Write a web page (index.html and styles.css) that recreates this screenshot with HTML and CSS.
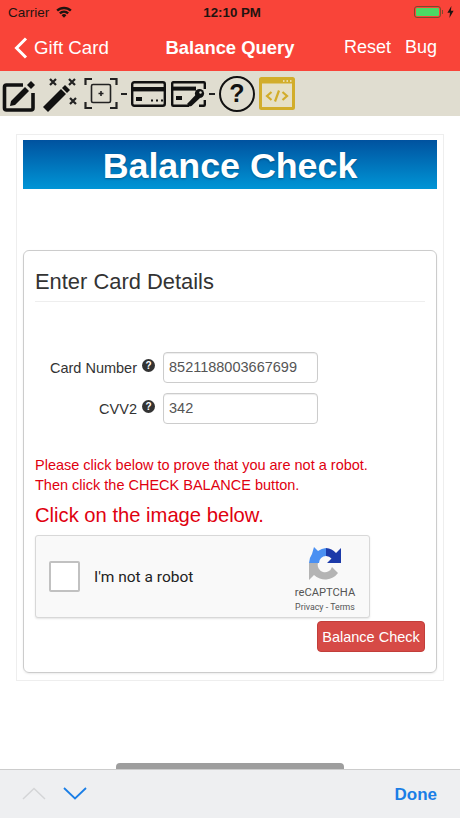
FILE: index.html
```html
<!DOCTYPE html>
<html lang="en">
<head>
    <meta charset="UTF-8">
    <title>Balance Query</title>
    <link rel="stylesheet" href="styles.css">
</head>
<body>
    <div class="app">
        <header class="top">
            <div class="status">
                <div class="status-left">
                    <span>Carrier</span>
                    <svg class="wifi" width="16" height="12" viewBox="0 0 16 12">
                        <path d="M0.3 3.8 A11 11 0 0 1 15.7 3.8 L14 5.6 A8.6 8.6 0 0 0 2 5.6 Z" fill="#1f1410"/>
                        <path d="M3 6.6 A7.2 7.2 0 0 1 13 6.6 L11.3 8.3 A4.8 4.8 0 0 0 4.7 8.3 Z" fill="#1f1410"/>
                        <path d="M5.6 9.2 A3.4 3.4 0 0 1 10.4 9.2 L8 11.7 Z" fill="#1f1410"/>
                    </svg>
                </div>
                <div class="status-time">12:10 PM</div>
                <div class="status-right">
                    <div class="battery"><div class="battery-fill"></div></div>
                    <div class="battery-cap"></div>
                    <svg width="7" height="12" viewBox="0 0 7 12"><path d="M4.4 0 L0.4 6.8 H3 L2.4 12 L6.6 4.8 H3.9 Z" fill="#1f1410"/></svg>
                </div>
            </div>
            <nav class="nav">
                <div class="nav-back">
                    <svg width="14" height="22" viewBox="0 0 14 22"><path d="M12 1.5 L2.5 11 L12 20.5" fill="none" stroke="#fff" stroke-width="3"/></svg>
                    <span>Gift Card</span>
                </div>
                <div class="nav-title">Balance Query</div>
                <div class="nav-actions"><span>Reset</span><span>Bug</span></div>
            </nav>
        </header>

        <div class="tools">
            <svg width="34" height="36" viewBox="0 0 34 36">
                <path d="M21 9 H4.5 A2 2 0 0 0 2.5 11 V32 A2 2 0 0 0 4.5 34 H29 A2 2 0 0 0 31 32 V17" fill="none" stroke="#111" stroke-width="3.6"/>
                <path d="M9 25 L23 11 L27 15 L13 29 L8 30 Z M25 9 L29 5 L33 9 L29 13 Z" fill="#111"/>
            </svg>
            <svg class="wand" width="36" height="36" viewBox="0 0 36 36">
                <path d="M0 31 L18 13 L23 18 L5 36 Z" fill="#111"/>
                <path d="M19 12 L22 9 L27 14 L24 17 Z" fill="#111"/>
                <path d="M7 3 L13 9 M13 3 L7 9 M26 3 L32 9 M32 3 L26 9 M27 22 L33 28 M33 22 L27 28" stroke="#222" stroke-width="2.2"/>
            </svg>
            <svg class="frame-icon" width="34" height="33" viewBox="0 0 34 33">
                <path d="M1.5 8 V2 H8 M26 2 H32.5 V8 M32.5 25 V31 H26 M8 31 H1.5 V25" fill="none" stroke="#222" stroke-width="2.2"/>
                <rect x="7.5" y="7.5" width="19" height="18" rx="1.5" fill="none" stroke="#222" stroke-width="1.6"/>
                <path d="M14.5 16.5 H19.5 M17 14 V19" stroke="#222" stroke-width="1.6"/>
            </svg>
            <span class="tool-dash"></span>
            <svg width="35" height="26" viewBox="0 0 35 26">
                <rect x="1.2" y="1.2" width="32.6" height="23.6" rx="2" fill="none" stroke="#111" stroke-width="2.4"/>
                <rect x="1" y="6" width="33" height="4.4" fill="#111"/>
                <rect x="5" y="16" width="6" height="4" fill="#111"/>
                <path d="M20 19.5 H22 M25 19.5 H27 M30 19.5 H32" stroke="#111" stroke-width="2"/>
            </svg>
            <svg class="card-key" width="35" height="26" viewBox="0 0 35 26">
                <path d="M33.8 8 V2.2 A1 1 0 0 0 32.8 1.2 H2.2 A1 1 0 0 0 1.2 2.2 V23.8 A1 1 0 0 0 2.2 24.8 H18" fill="none" stroke="#111" stroke-width="2.4"/>
                <path d="M28 24.8 H32.8 A1 1 0 0 0 33.8 23.8 V19" fill="none" stroke="#111" stroke-width="2.4"/>
                <rect x="1" y="5.6" width="24" height="4" fill="#111"/>
                <rect x="5" y="15" width="6" height="4" fill="#111"/>
                <circle cx="28.5" cy="12.5" r="4.6" fill="#111"/>
                <circle cx="29.5" cy="11.5" r="1.2" fill="#e0ddd0"/>
                <path d="M25.5 13 L16 23 L18.5 25.5 L20.5 25 L29 17 Z" fill="#111"/>
            </svg>
            <span class="tool-dash"></span>
            <div class="help-tool">?</div>
            <svg class="code-icon" width="36" height="33" viewBox="0 0 36 33">
                <rect x="1.5" y="1.5" width="33" height="30" rx="1" fill="#e6e0c6" stroke="#d2ad2b" stroke-width="3"/>
                <rect x="1.5" y="1.5" width="33" height="5" fill="#d2ad2b"/>
                <path d="M24 4 H25.5 M27.5 4 H29 M31 4 H32.5" stroke="#f1ead0" stroke-width="1.4"/>
                <path d="M12.5 15 L8 19 L12.5 23 M23.5 15 L28 19 L23.5 23 M20 13.5 L16 24.5" fill="none" stroke="#d2ad2b" stroke-width="2.2"/>
            </svg>
        </div>

        <main class="page">
            <div class="frame">
                <div class="banner">Balance Check</div>
                <section class="panel">
                    <h2 class="panel-title">Enter Card Details</h2>
                    <div class="fields">
                        <div class="field">
                            <label class="field-label">Card Number</label>
                            <span class="hint">?</span>
                            <div class="input">8521188003667699</div>
                        </div>
                        <div class="field">
                            <label class="field-label">CVV2</label>
                            <span class="hint">?</span>
                            <div class="input">342</div>
                        </div>
                    </div>
                    <p class="note">Please click below to prove that you are not a robot.<br>Then click the CHECK BALANCE button.</p>
                    <p class="note-big">Click on the image below.</p>
                    <div class="captcha">
                        <div class="captcha-box"></div>
                        <div class="captcha-text">I'm not a robot</div>
                        <div class="captcha-logo">
                            <svg width="34" height="35" viewBox="0 0 34 35">
                                <path d="M6 1 L10 5 A15 15 0 0 1 18 2 V10 A7 7 0 0 0 11 17 H1 A16 16 0 0 1 4 8 Z" fill="#4a90f2"/>
                                <path d="M18 2 A15 15 0 0 1 28 7 L33 2 V17 H19 L23.5 12.5 A7 7 0 0 0 18 10 Z" fill="#1c3aa9"/>
                                <path d="M1 17 H10 A7 7 0 0 0 24 21 L30 27 A16 16 0 0 1 6 29 L1 34 Z" fill="#b4b4b4"/>
                            </svg>
                            <div class="captcha-brand">reCAPTCHA</div>
                            <div class="captcha-links">Privacy - Terms</div>
                        </div>
                    </div>
                    <div class="actions"><button class="check-btn">Balance Check</button></div>
                </section>
            </div>
        </main>

        <footer class="bottom">
            <div class="scroll-handle"></div>
            <div class="bottom-arrows">
                <svg width="24" height="13" viewBox="0 0 24 13"><path d="M1 12 L12 1.5 L23 12" fill="none" stroke="#d4d5d7" stroke-width="1.5"/></svg>
                <svg width="24" height="13" viewBox="0 0 24 13"><path d="M1 1 L12 11.5 L23 1" fill="none" stroke="#1a7ee6" stroke-width="1.8"/></svg>
            </div>
            <div class="bottom-done">Done</div>
        </footer>
    </div>
</body>
</html>
```

FILE: styles.css
```css
* {
    box-sizing: border-box;
}
html, body {
    margin: 0;
    padding: 0;
}
body {
    font-family: "Liberation Sans", Arial, sans-serif;
    background-color: white;
}
.app {
    width: 460px;
    height: 818px;
    display: flex;
    flex-direction: column;
    overflow: hidden;
}

/* red header */
.top {
    height: 71px;
    background-color: #f94439;
}
.status {
    height: 24px;
    padding: 0 6px 0 8px;
    display: flex;
    align-items: center;
    justify-content: space-between;
    color: #1f1410;
    font-size: 13.5px;
}
.status-left {
    display: flex;
    align-items: center;
    gap: 7px;
}
.status-time {
    font-weight: bold;
    font-size: 13.3px;
    margin-right: 22px;
}
.status-right {
    display: flex;
    align-items: center;
}
.battery {
    width: 27px;
    height: 12px;
    border: 1px solid #7d4a2c;
    border-radius: 3px;
    padding: 1px;
}
.battery-fill {
    height: 100%;
    background-color: #4cd964;
    border-radius: 1px;
}
.battery-cap {
    width: 1px;
    height: 4px;
    background-color: #7d4a2c;
    margin: 0 4px 0 1px;
}
.nav {
    height: 47px;
    padding: 0 23px 0 14px;
    display: flex;
    align-items: center;
    justify-content: space-between;
    color: white;
    font-size: 18px;
}
.nav-back {
    width: 110px;
    display: flex;
    align-items: center;
    gap: 6px;
    font-size: 18.7px;
}
.nav-title {
    font-weight: bold;
    font-size: 18.4px;
    margin-left: -8px;
}
.nav-actions {
    display: flex;
    gap: 14px;
}

/* icon strip */
.tools {
    height: 45px;
    background-color: #e0ddd0;
    padding: 0 0 0 2px;
    display: flex;
    align-items: center;
}
.wand {
    margin-left: 7px;
}
.frame-icon {
    margin-left: 5px;
}
.tool-dash {
    width: 6px;
    height: 2px;
    background-color: #222;
    margin: 0 4px 0 3px;
}
.card-key {
    margin-left: 5px;
}
.help-tool {
    width: 36px;
    height: 36px;
    border: 2.4px solid #111;
    border-radius: 50%;
    display: flex;
    align-items: center;
    justify-content: center;
    font-size: 25px;
    font-weight: bold;
    color: #111;
}
.code-icon {
    margin-left: 4px;
}

/* page content */
.page {
    flex: 1;
    padding: 18px 16px 0 16px;
}
.frame {
    width: 428px;
    height: 547px;
    border: 1px solid #eeeeee;
    padding: 5px 6px;
}
.banner {
    height: 49px;
    background: linear-gradient(to bottom, #00529f, #0095d6);
    color: white;
    font-size: 35.8px;
    font-weight: bold;
    text-align: center;
    line-height: 52px;
    text-shadow: 0 1px 2px rgba(0, 0, 0, 0.3);
}
.panel {
    margin-top: 61px;
    height: 423px;
    border: 1px solid #cccccc;
    border-radius: 6px;
    box-shadow: 0 1px 2px rgba(0, 0, 0, 0.08);
    padding: 0 11px;
}
.panel-title {
    margin: 0;
    height: 51px;
    padding: 18px 0 0 0;
    font-size: 21.9px;
    line-height: 26px;
    font-weight: normal;
    color: #333;
    border-bottom: 1px solid #eeeeee;
}
.fields {
    padding-top: 50px;
}
.field {
    display: flex;
    align-items: center;
    height: 31px;
    margin-bottom: 10px;
}
.field-label {
    width: 102px;
    text-align: right;
    font-size: 14.5px;
    color: #333;
}
.hint {
    width: 13px;
    height: 13px;
    margin: -4px 8px 0 5px;
    background-color: #333;
    border-radius: 50%;
    color: white;
    font-size: 10px;
    font-weight: bold;
    line-height: 13px;
    text-align: center;
}
.input {
    width: 155px;
    height: 31px;
    border: 1px solid #cccccc;
    border-radius: 4px;
    box-shadow: inset 0 1px 1px rgba(0, 0, 0, 0.075);
    padding: 0 5px;
    line-height: 29px;
    font-size: 14.5px;
    color: #555;
}
.note {
    margin: 31px 0 0 0;
    font-size: 14.5px;
    line-height: 20px;
    color: #e0000f;
}
.note-big {
    margin: 8px 0 0 0;
    font-size: 20.2px;
    line-height: 24px;
    color: #e0000f;
}
.captcha {
    margin-top: 8px;
    width: 335px;
    height: 83px;
    background-color: #f9f9f9;
    border: 1px solid #d8d8d8;
    border-radius: 3px;
    box-shadow: 0 1px 2px rgba(0, 0, 0, 0.1);
    display: flex;
    align-items: center;
    padding: 0 13px 0 13px;
}
.captcha-box {
    width: 31px;
    height: 31px;
    background-color: white;
    border: 2px solid #c1c1c1;
    border-radius: 2px;
}
.captcha-text {
    flex: 1;
    margin-left: 14px;
    font-family: Roboto, sans-serif;
    font-size: 15.5px;
    color: #222;
}
.captcha-logo {
    width: 62px;
    display: flex;
    flex-direction: column;
    align-items: center;
    padding-top: 6px;
}
.captcha-brand {
    margin-top: 5px;
    font-family: Roboto, sans-serif;
    font-size: 11.2px;
    line-height: 14px;
    color: #555;
}
.captcha-links {
    margin-top: 1px;
    font-family: Roboto, sans-serif;
    font-size: 8.8px;
    line-height: 12px;
    color: #555;
    white-space: nowrap;
}
.actions {
    display: flex;
    justify-content: flex-end;
    margin-top: 3px;
}
.check-btn {
    width: 108px;
    height: 31px;
    padding: 0;
    background-color: #d64a46;
    border: 1px solid #c23e3a;
    border-radius: 4px;
    color: white;
    font-family: inherit;
    font-size: 14.5px;
}

/* bottom bar */
.bottom {
    height: 49px;
    background-color: #eeeff1;
    border-top: 1px solid #cccccc;
    padding: 0 23px 0 22px;
    display: flex;
    justify-content: space-between;
    align-items: center;
    position: relative;
}
.scroll-handle {
    position: absolute;
    left: 116px;
    top: -7px;
    width: 228px;
    height: 6px;
    background-color: #9e9e9e;
    border-radius: 4px 4px 0 0;
}
.bottom-arrows {
    display: flex;
    gap: 17px;
    margin-top: -2px;
}
.bottom-done {
    color: #1a7ee6;
    font-size: 17px;
    font-weight: bold;
    margin-top: 1px;
}
```
